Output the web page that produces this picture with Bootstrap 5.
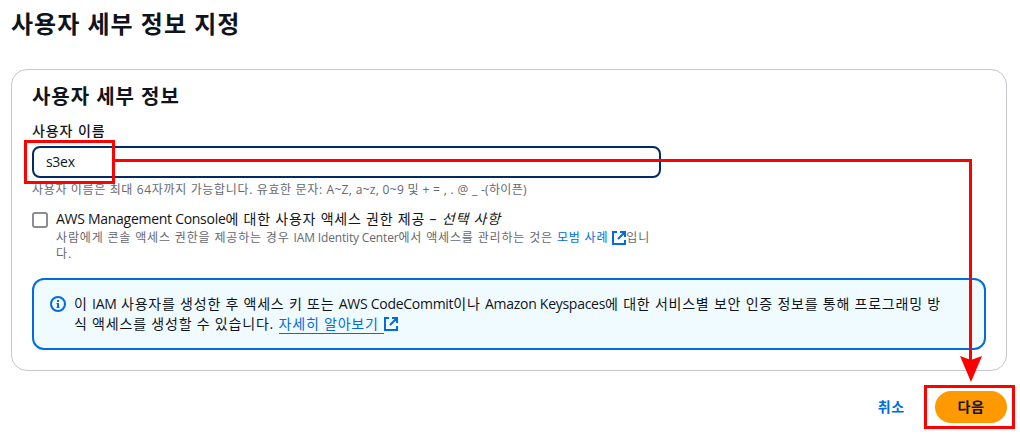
<!DOCTYPE html>
<html lang="ko">
<head>
  <meta charset="UTF-8" />
  <meta name="viewport" content="width=device-width, initial-scale=1" />
  <title>사용자 세부 정보 지정</title>
  <!-- Bootstrap CSS -->
  <link
    href="https://cdn.jsdelivr.net/npm/bootstrap@5.3.2/dist/css/bootstrap.min.css"
    rel="stylesheet"
  />
  <style>
    body {
      font-family: 'Open Sans', 'Noto Sans CJK KR', sans-serif;
      font-size: 14px;
      line-height: 20px;
      letter-spacing: 0.78px;
      color: #0f141a;
      background: #fff;
      overflow: hidden;
    }
    .wizard {
      position: relative;
      width: 1020px;
      height: 435px;
      padding: 8px 13px 0 11px;
    }
    .t {
      white-space: nowrap;
    }
    /* Latin runs are set tighter than the Hangul around them */
    .en {
      letter-spacing: -0.28px;
    }
    .hint .en {
      letter-spacing: -0.16px;
    }
    .page-title {
      font-size: 24px;
      line-height: 32px;
      font-weight: 700;
      letter-spacing: 1px;
    }
    .panel {
      margin-top: 29px;
      height: 302px;
      padding: 13px 20px 0;
      border: 1px solid #c6c6cd;
      border-radius: 16px;
    }
    .panel-title {
      font-size: 20px;
      line-height: 28px;
      font-weight: 700;
      letter-spacing: 0.95px;
    }
    .field-label {
      margin-top: 10px;
      font-weight: 500;
      letter-spacing: 0.9px;
    }
    .name-input {
      width: 629px;
      height: 32px;
      margin-top: 5px;
      padding: 4px 12px;
      border: 2px solid #002b66;
      border-radius: 8px;
      font-size: 14px;
      line-height: 20px;
      letter-spacing: -0.3px;
      color: #0f141a;
    }
    .hint {
      font-size: 12px;
      line-height: 16px;
      letter-spacing: 0.84px;
      color: #656871;
    }
    .name-hint {
      letter-spacing: 0.65px;
    }
    .name-hint .chars {
      letter-spacing: 0.32px;
    }
    .check-row {
      margin-top: 12px;
    }
    .check-row .option {
      margin-top: -1px;
      margin-bottom: 1px;
    }
    .check-box {
      width: 16px;
      height: 16px;
      margin-top: 2px;
      border: 2px solid #8c8c94;
      border-radius: 3px;
    }
    .aws-link {
      color: #006ce0;
      text-decoration: none;
    }
    .aws-link.lined {
      padding-right: 5px;
      border-bottom: 1px solid #006ce0;
    }
    .ext-icon {
      margin-top: -2px;
    }
    .info-box {
      width: 954px;
      height: 72px;
      margin-top: 16px;
      padding: 14px 16px;
      border: 2px solid #006ce0;
      border-radius: 12px;
      background: #f0fbff;
    }
    .info-icon {
      margin-top: 2px;
    }
    .info-tail {
      letter-spacing: 0.8px;
    }
    .cancel-link {
      margin-right: 30px;
      font-weight: 700;
    }
    .next-btn {
      width: 72px;
      height: 32px;
      border-radius: 16px;
      background: #ff9900;
      font-size: 14px;
      font-weight: 700;
      letter-spacing: 0.7px;
      color: #0f141a;
    }
    .next-btn.btn {
      padding: 0 0 2px;
    }
    .overlay {
      left: 0;
      top: 0;
      pointer-events: none;
    }
  </style>
</head>
<body>
  <div class="wizard">
    <h1 class="page-title t mb-0">사용자 세부 정보 지정</h1>

    <section class="panel">
      <h2 class="panel-title t mb-0">사용자 세부 정보</h2>
      <div class="field-label t">사용자 이름</div>
      <div class="name-input">s3ex</div>
      <div class="hint name-hint t mt-1">사용자 이름은 최대 64자까지 가능합니다. 유효한 문자: <span class="chars">A~Z, a~z, 0~9 및 + = , . @ _ -(하이픈)</span></div>

      <div class="check-row d-flex gap-2">
        <div class="check-box flex-shrink-0"></div>
        <div>
          <div class="option t"><span class="en">AWS Management Console</span>에 대한 사용자 액세스 권한 제공 – <em>선택 사항</em></div>
          <div class="hint t">사람에게 콘솔 액세스 권한을 제공하는 경우 <span class="en">IAM Identity Center</span>에서 액세스를 관리하는 것은 <a class="aws-link" href="#">모범 사례</a>
            <svg class="ext-icon" width="14" height="14" viewBox="0 0 14 14" fill="none" stroke="#006ce0" stroke-width="2"><path d="M5 1H1v12h12V9M8 1h5v5M13 1L6 8" /></svg>입니</div>
          <div class="hint">다.</div>
        </div>
      </div>

      <div class="info-box d-flex gap-2">
        <svg class="info-icon flex-shrink-0" width="16" height="16" viewBox="0 0 16 16" fill="none" stroke="#006ce0" stroke-width="2"><circle cx="8" cy="8" r="7" /><path d="M8 4v2M8 7v5" /><path d="M6.5 7.5H8M6.5 11.5h3" stroke-width="1" /></svg>
        <div>
          <div class="t">이 <span class="en">IAM</span> 사용자를 생성한 후 액세스 키 또는 <span class="en">AWS CodeCommit</span>이나 <span class="en">Amazon Keyspaces</span>에 대한 서비스별 보안 인증 정보를 통해 프로그래밍 방</div>
          <div class="info-tail t">식 액세스를 생성할 수 있습니다. <a class="aws-link lined" href="#">자세히 알아보기</a><svg class="ext-icon" width="14" height="14" viewBox="0 0 14 14" fill="none" stroke="#006ce0" stroke-width="2"><path d="M5 1H1v12h12V9M8 1h5v5M13 1L6 8" /></svg></div>
        </div>
      </div>
    </section>

    <div class="d-flex justify-content-end align-items-center mt-3 pt-1">
      <a class="aws-link cancel-link" href="#">취소</a>
      <button class="next-btn btn">다음</button>
    </div>

    <!-- Click path from the name field to the next button -->
    <svg class="overlay position-absolute" width="1020" height="435" fill="none" stroke="#f00" stroke-width="3">
      <rect x="25.5" y="141.5" width="88" height="41" />
      <path d="M114 160.5H970.5V364" />
      <rect x="925.5" y="386.5" width="88" height="41" />
      <path d="M960 356l11 4 11-4-11 26z" fill="#f00" stroke="none" />
    </svg>
  </div>

  <script src="https://cdn.jsdelivr.net/npm/bootstrap@5.3.2/dist/js/bootstrap.bundle.min.js"></script>
</body>
</html>
